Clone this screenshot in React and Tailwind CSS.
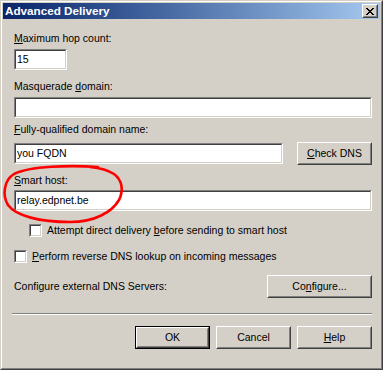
import React from 'react';

const font = { fontFamily: '"Liberation Sans", Arial, sans-serif' };

function TextBox({ value = '', className = '' }) {
  return (
    <div className={`border border-t-[#808080] border-l-[#808080] border-b-white border-r-white ${className}`}>
      <div className="h-[19px] border border-t-[#404040] border-l-[#404040] border-b-[#d4d0c8] border-r-[#d4d0c8] bg-white px-[1px] flex items-center text-black">
        {value}
      </div>
    </div>
  );
}

function Button({ children, isDefault = false, className = '' }) {
  if (isDefault) {
    return (
      <div className={`h-[23px] border border-black ${className}`}>
        <div className="h-full border border-t-white border-l-white border-b-[#404040] border-r-[#404040]">
          <div className="h-full border border-t-[#d4d0c8] border-l-[#d4d0c8] border-b-[#808080] border-r-[#808080] flex items-center justify-center text-black">
            {children}
          </div>
        </div>
      </div>
    );
  }
  return (
    <div className={`h-[23px] border border-t-white border-l-white border-b-[#404040] border-r-[#404040] ${className}`}>
      <div className="h-full border border-t-[#d4d0c8] border-l-[#d4d0c8] border-b-[#808080] border-r-[#808080] flex items-center justify-center text-black">
        {children}
      </div>
    </div>
  );
}

function CheckBox() {
  return (
    <div className="w-[13px] h-[13px] shrink-0 border border-t-[#808080] border-l-[#808080] border-b-white border-r-white">
      <div className="w-full h-full border border-t-[#404040] border-l-[#404040] border-b-[#d4d0c8] border-r-[#d4d0c8] bg-white" />
    </div>
  );
}

export default function App() {
  return (
    <div className="relative w-[383px] h-[370px] overflow-hidden bg-[#d4d0c8] text-[10.5px] leading-[13px] text-black select-none" style={font}>
      {/* window frame */}
      <div className="w-full h-full border border-t-[#d4d0c8] border-l-[#d4d0c8] border-b-[#404040] border-r-[#404040]">
        <div className="w-full h-full border border-t-white border-l-white border-b-[#808080] border-r-[#808080] p-[1px] flex flex-col">
          {/* title bar */}
          <div className="h-[16px] flex items-center justify-between bg-gradient-to-r from-[#0a246a] to-[#a6caf0] pl-[2px] pr-[2px]">
            <span className="text-white font-bold text-[11.7px] leading-[14px]">Advanced Delivery</span>
            <div className="w-[16px] h-[14px] border border-t-white border-l-white border-b-[#404040] border-r-[#404040] bg-[#d4d0c8]">
              <div className="w-full h-full border border-t-[#d4d0c8] border-l-[#d4d0c8] border-b-[#808080] border-r-[#808080] flex items-center justify-center">
                <svg width="8" height="7" viewBox="0 0 8 7" shapeRendering="crispEdges">
                  <path d="M0 0h2v1h1v1h2V1h1V0h2v1H7v1H6v1H5v1h1v1h1v1h1v1H6V6H5V5H3v1H2v1H0V6h1V5h1V4h1V3H2V2H1V1H0z" fill="#000" />
                </svg>
              </div>
            </div>
          </div>

          {/* content */}
          <div className="flex flex-col pl-[11px] pr-[8px]">
            <div className="mt-[13px]"><u>M</u>aximum hop count:</div>
            <TextBox value="15" className="mt-[4px] w-[53px]" />

            <div className="mt-[10px]">Masquerade <u>d</u>omain:</div>
            <TextBox className="mt-[4px]" />

            <div className="mt-[5px]"><u>F</u>ully-qualified domain name:</div>
            <div className="mt-[6px] flex items-start justify-between">
              <TextBox value="you FQDN" className="mt-[1px] w-[269px]" />
              <Button className="w-[75px]"><span><u>C</u>heck DNS</span></Button>
            </div>

            <div className="mt-[9px]"><u>S</u>mart host:</div>
            <TextBox value="relay.edpnet.be" className="mt-[3px]" />

            <div className="mt-[13px] ml-[15px] flex items-center gap-[5px]">
              <CheckBox />
              <span>Attempt direct delivery <u>b</u>efore sending to smart host</span>
            </div>

            <div className="mt-[13px] flex items-center gap-[5px]">
              <CheckBox />
              <span><u>P</u>erform reverse DNS lookup on incoming messages</span>
            </div>

            <div className="mt-[12px] flex items-center justify-between">
              <span>Configure external DNS Servers:</span>
              <Button className="w-[105px]"><span>Co<u>n</u>figure...</span></Button>
            </div>

            <div className="mt-[15px] -ml-[2px] border-t border-t-[#808080] border-b border-b-white" />

            <div className="mt-[11px] flex justify-end gap-[6px]">
              <Button isDefault className="w-[75px]">OK</Button>
              <Button className="w-[75px]">Cancel</Button>
              <Button className="w-[75px]"><span><u>H</u>elp</span></Button>
            </div>
          </div>
        </div>
      </div>

      {/* red hand-drawn annotation */}
      <svg className="absolute left-0 top-0 pointer-events-none" width="383" height="370" viewBox="0 0 383 370">
        <path
          d="M98 167 C70 165, 30 166, 14 174 C4 180, 2 195, 8 205 C16 216, 40 222, 70 222 C95 222, 112 212, 119 200 C124 190, 122 180, 114 174 C108 170, 100 168, 90 167"
          fill="none"
          stroke="#ff0000"
          strokeWidth="2.6"
          strokeLinecap="round"
        />
      </svg>
    </div>
  );
}
